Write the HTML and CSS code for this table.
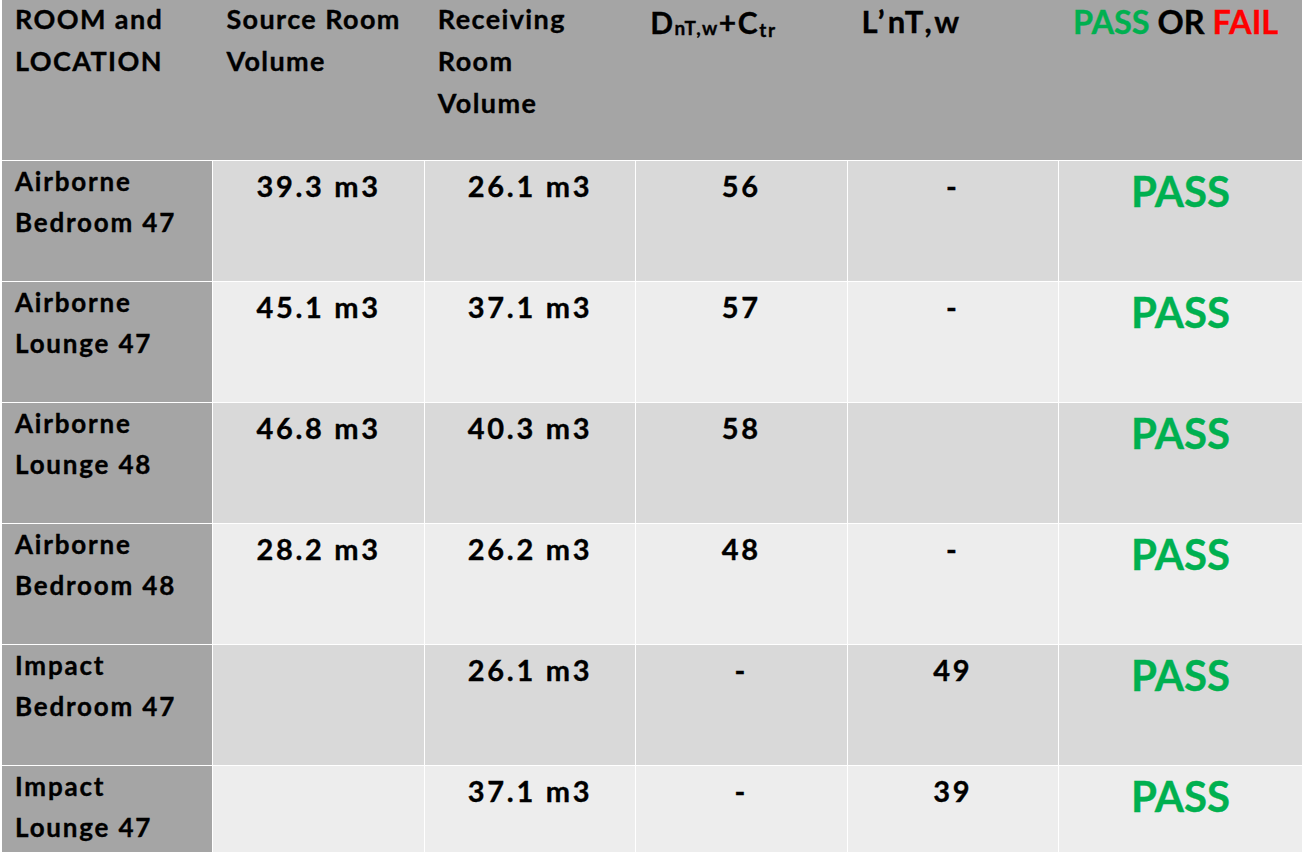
FILE: index.html
```html
<!DOCTYPE html>
<html lang="en">
<head>
<meta charset="utf-8">
<title>Sound Test Results</title>
<link rel="stylesheet" href="styles.css">
</head>
<body>
<div class="table">
  <div class="row head">
    <div class="hc">ROOM and<br>LOCATION</div>
    <div class="hc">Source Room<br>Volume</div>
    <div class="hc">Receiving<br>Room<br>Volume</div>
    <div class="hc hc-d">D<span class="sub">nT,w</span>+C<span class="sub sub2">tr</span></div>
    <div class="hc hc-l">L’nT,w</div>
    <div class="hc hc-pf"><span class="green">PASS</span> OR <span class="red">FAIL</span></div>
  </div>

  <div class="row dark">
    <div class="label">Airborne<br>Bedroom 47</div>
    <div class="val">39.3 m3</div>
    <div class="val">26.1 m3</div>
    <div class="val">56</div>
    <div class="val">-</div>
    <div class="res">PASS</div>
  </div>

  <div class="row light">
    <div class="label">Airborne<br>Lounge 47</div>
    <div class="val">45.1 m3</div>
    <div class="val">37.1 m3</div>
    <div class="val">57</div>
    <div class="val">-</div>
    <div class="res">PASS</div>
  </div>

  <div class="row dark">
    <div class="label">Airborne<br>Lounge 48</div>
    <div class="val">46.8 m3</div>
    <div class="val">40.3 m3</div>
    <div class="val">58</div>
    <div class="val"></div>
    <div class="res">PASS</div>
  </div>

  <div class="row light">
    <div class="label">Airborne<br>Bedroom 48</div>
    <div class="val">28.2 m3</div>
    <div class="val">26.2 m3</div>
    <div class="val">48</div>
    <div class="val">-</div>
    <div class="res">PASS</div>
  </div>

  <div class="row dark">
    <div class="label">Impact<br>Bedroom 47</div>
    <div class="val"></div>
    <div class="val">26.1 m3</div>
    <div class="val">-</div>
    <div class="val">49</div>
    <div class="res">PASS</div>
  </div>

  <div class="row light">
    <div class="label">Impact<br>Lounge 47</div>
    <div class="val"></div>
    <div class="val">37.1 m3</div>
    <div class="val">-</div>
    <div class="val">39</div>
    <div class="res">PASS</div>
  </div>
</div>
</body>
</html>
```

FILE: styles.css
```css
html, body {
  margin: 0;
  padding: 0;
  background: #ffffff;
  overflow: hidden;
}

body {
  font-family: Lato, "Open Sans", "Liberation Sans", sans-serif;
  font-weight: 700;
  color: #000000;
  -webkit-text-stroke: 0.35px;
}

.table {
  display: flex;
  flex-direction: column;
  gap: 1px;
  padding-left: 2px;
}

.row {
  display: grid;
  grid-template-columns: repeat(5, 210.4px) 1fr;
  column-gap: 1px;
  height: 120px;
}

.row.head {
  height: 160px;
  background: #a5a5a5;
  margin-top: -4px;
  padding-top: 4px;
}

.hc {
  font-size: 27px;
  line-height: 42px;
  letter-spacing: 1.4px;
  padding-left: 13px;
  margin-top: -2px;
  white-space: nowrap;
}

.hc-d {
  font-size: 30px;
  letter-spacing: 1.6px;
  padding-top: 3px;
  padding-left: 14px;
}

.hc-l {
  font-size: 31px;
  letter-spacing: 3.2px;
  padding-top: 2px;
  padding-left: 14px;
}

.hc-pf {
  font-size: 32.5px;
  letter-spacing: 0;
  padding-top: 3px;
  padding-left: 14px;
}

.sub {
  font-size: 19px;
  vertical-align: -1px;
}

.sub2 {
  vertical-align: -3px;
}

.green { color: #00b050; }
.red { color: #ff0000; }

.dark > div { background: #d9d9d9; }
.light > div { background: #ededed; }

.row > .label {
  background: #a5a5a5;
  font-size: 26px;
  line-height: 41px;
  letter-spacing: 1.8px;
  padding-top: 0;
  padding-left: 13px;
  white-space: nowrap;
}

.val {
  font-size: 29px;
  line-height: 41px;
  letter-spacing: 2.7px;
  padding-top: 4px;
  text-align: center;
}

.res {
  font-size: 42px;
  line-height: 50px;
  padding-top: 5px;
  text-align: center;
  color: #00b050;
}
```
